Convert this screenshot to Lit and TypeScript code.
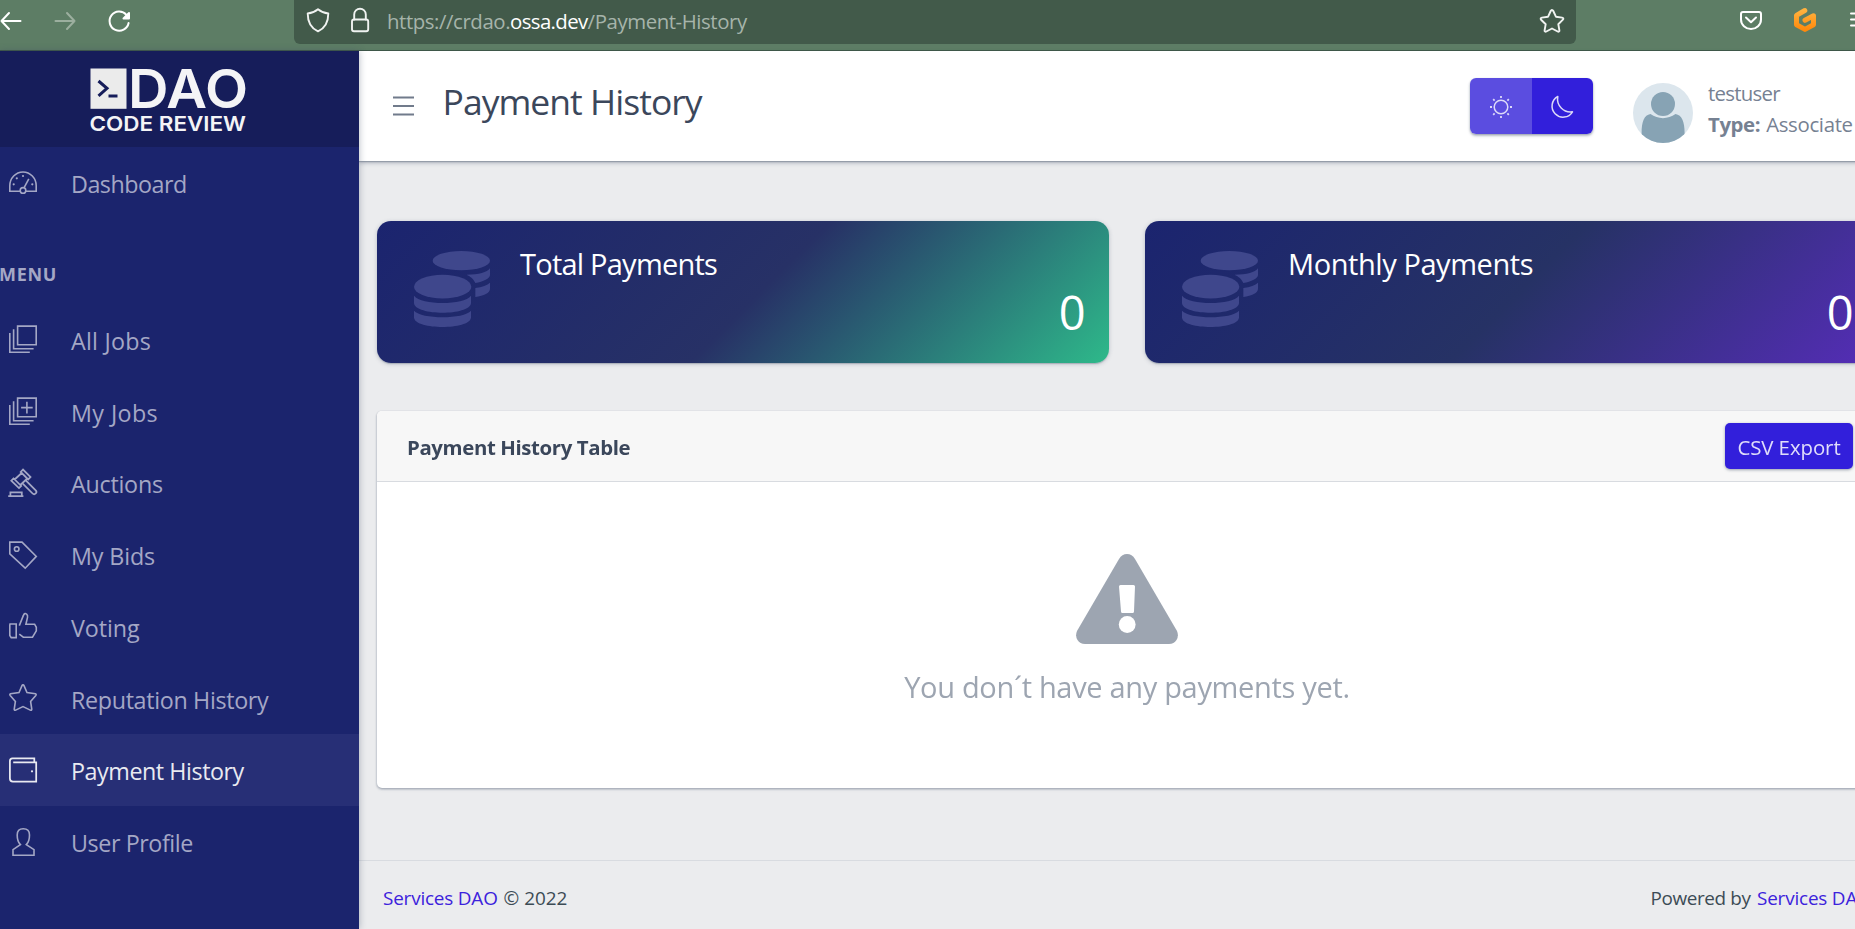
import { LitElement, html, css, svg } from "lit";
import { customElement, property } from "lit/decorators.js";
import { styleMap } from "lit/directives/style-map.js";
import { classMap } from "lit/directives/class-map.js";

const FONT = css`"Open Sans", "Noto Sans", sans-serif`;

const glyphs: Record<string, unknown> = {
  speed: svg`<path d="M11 22.2H.8V16.8a13.2 13.8 0 0 1 26.4 0V22.2H17"/><circle cx="14" cy="21.4" r="2.8"/><path d="M15 18.8 19.8 9.8"/><g class="solid"><circle cx="4.7" cy="15.3" r="1.1"/><circle cx="7.8" cy="9.3" r="1.1"/><circle cx="14" cy="7" r="1.1"/><circle cx="23.3" cy="15.3" r="1.1"/></g>`,
  library: svg`<path d="M8.6 1.1h18.6v18.6H8.6zM4.6 4.2v19.5h20M.8 8v19.3h20"/>`,
  libraryAdd: svg`<path d="M8.6 1.1h18.6v18.6H8.6zM4.6 4.2v19.5h20M.8 8v19.3h20M17.9 4.8v11.6M12.1 10.6h11.6"/>`,
  gavel: svg`<path class="heavy" d="M14 .6 11.7 2.9 19.2 10.4 21.5 8.1zM4.6 9.4 2.3 11.7 10 19.1 12.2 16.9zM12.7 4 5.6 10.5M18.3 9.5 11.3 16M14 14.8 23.6 24.5a2.1 2.1 0 0 0 3.1-3.1L17 11.7M-.8 27.1H14.4M1.4 27v-3.6H12.8V27"/>`,
  tag: svg`<path d="M.8 1.1H13L27.3 15.4 16.2 27.2.8 12.9z"/><circle cx="7.7" cy="8" r="2.3"/>`,
  thumb: svg`<path d="M1 12h6.2v13.6H2.2L.8 23.5V13zM10.3 13.6 14.4 3.4c.7-2.2 2.2-2.2 3.2-1.2 1 .9 1.2 1.9.9 3.2L16.9 12.2h8.7l1.7 3.1v3.5l-3.8 6.4H14.3l-4-3"/>`,
  star: svg`<path d="M14 .9q.7 0 1 .7l3 6.9 8.4 1.3q1.3.5.4 1.6L21.6 17.4l1.2 7.9q-.1 1.4-1.5.8L14 22.6 6.700 26.100q-1.400.6-1.500-.8L6.400 17.400 1.200 11.400Q.3 10.300 1.600 9.800L10 8.500l3-6.900Q13.300.9 14 .900z"/>`,
  wallet: svg`<path class="heavy" d="M25.300 6.300V2.300H3.500A2.700 2.700 0 0 0 .9 5V22.500a3 3 0 0 0 3 3H27.200V6.300H4.200"/><circle class="solid" cx="23" cy="15.300" r="1.100"/>`,
  user: svg`<path d="M14.200.8c-4 0-6 2.700-6 6.200 0 4 .9 7.500 3.200 9.700L4 21.700V27.300H25V21.700l-7.700-5c2.300-2.200 3.200-5.700 3.200-9.700 0-3.500-2.200-6.200-6.300-6.200z"/>`,
};

interface NavEntry { icon: string; label: string; tracking: number; }

@customElement("side-link")
class SideLink extends LitElement {
  @property() icon = "";
  @property() label = "";
  @property({ type: Number }) tracking = 0;
  @property({ type: Boolean, reflect: true }) active = false;
  static styles = css`
    :host { display: flex; align-items: center; gap: 34px; height: 71.75px; padding-left: 9px; box-sizing: border-box; color: #a4a7c5; font: 23.3px/32px ${FONT}; white-space: nowrap; }
    :host([active]) { background: #272f76; color: #e9eaf1; }
    .icon { width: 28px; height: 28px; flex: none; overflow: visible; fill: none; stroke: currentColor; stroke-width: 1.6; }
    .heavy { stroke-width: 1.75; }
    .solid { fill: currentColor; stroke: none; }
    .label { padding-top: 3px; }
  `;
  render() {
    return html`<svg class="icon" viewBox="0 0 28 28">${glyphs[this.icon]}</svg>
      <span class="label" style=${styleMap({ letterSpacing: `${this.tracking}px` })}>${this.label}</span>`;
  }
}

@customElement("stat-card")
class StatCard extends LitElement {
  @property() heading = "";
  @property() value = "";
  @property() tone = "green";
  static styles = css`
    :host { display: block; }
    .card { display: flex; height: 142px; box-sizing: border-box; padding: 30px 23.5px 0 37px; border-radius: 14px; color: #fff; font-family: ${FONT}; box-shadow: 0 1px 1px rgba(60,75,100,.14), 0 2px 1px -1px rgba(60,75,100,.12), 0 1px 4px rgba(60,75,100,.28); }
    .green { background: linear-gradient(135deg, #1b246f, #273166 52%, #2eb98a); }
    .violet { background: linear-gradient(135deg, #1b246f, #263265 51%, #552db7); }
    .coins { width: 76px; height: 76px; flex: none; fill: #3f478c; }
    .body { flex: 1; display: flex; flex-direction: column; padding-left: 30px; }
    .heading { font-size: 29px; line-height: 40px; margin-top: -7px; letter-spacing: -.77px; }
    .violet .heading { letter-spacing: -.43px; }
    .value { font-size: 47px; line-height: 60px; text-align: right; margin-top: -2px; }
  `;
  render() {
    return html`<div class=${classMap({ card: true, [this.tone]: true })}>
      <svg class="coins" viewBox="0 0 228 228">
        <ellipse cx="142" cy="29" rx="86" ry="29"/>
        <path d="M228 52C219 64 195 71 158 71C168 76 178 82 184 96C208 92 228 83 228 72ZM228 95C220 103 205 108 184 111V138C210 134 228 126 228 113Z"/>
        <ellipse cx="86" cy="107" rx="86" ry="35.5"/>
        <path d="M0 134C22 163 150 163 171 134V157C166 195 5 195 0 157ZM0 179C22 205 150 205 171 179V200C166 237 5 237 0 200Z"/>
      </svg>
      <div class="body"><div class="heading">${this.heading}</div><div class="value">${this.value}</div></div>
    </div>`;
  }
}

@customElement("browser-bar")
class BrowserBar extends LitElement {
  static styles = css`
    :host { display: flex; height: 51px; box-sizing: border-box; border-bottom: 1px solid #3f5848; background: #5d7d65; font: 20.4px/28px ${FONT}; }
    svg { display: block; flex: none; fill: none; stroke: #fff; stroke-width: 2; stroke-linecap: round; stroke-linejoin: round; overflow: visible; }
    .tools { width: 294px; flex: none; }
    .address { width: 1282px; height: 44px; box-sizing: border-box; display: flex; background: #425a4a; border-radius: 0 0 6px 6px; flex: none; }
    .url { flex: 1; padding-top: 7px; color: #a6b4aa; letter-spacing: -.43px; white-space: nowrap; }
    .host { color: #fff; letter-spacing: -.62px; }
    .faint { stroke: #9caf9f; }
    .soft { stroke: #f0f3f1; stroke-width: 1.9; }
    .brand { fill: none; stroke: url(#amber); stroke-width: 5; stroke-linejoin: round; }
  `;
  render() {
    return html`
      <svg class="tools" width="294" height="50" viewBox="0 0 294 50">
        <path d="M20.5 21H1.5M9 13 1.5 21 9 29"/>
        <path class="faint" d="M55.5 21H74.5M67 13l7.5 8L67 29"/>
        <path d="M128.6 23a9.6 9.6 0 1 1-2.2-8.2"/><path d="M129 13v5.5h-5.5z" fill="#fff"/>
      </svg>
      <div class="address">
        <svg width="93" height="44" viewBox="294 0 93 44"><path class="soft" d="M318 9.2c3.2 2.7 6.5 3.9 10.3 4.3 0 8.5-2.7 14.5-10.3 17.8-7.6-3.3-10.3-9.3-10.3-17.8 3.8-.4 7.1-1.6 10.3-4.3z"/><path class="soft" d="M354.2 19.5v-5a5.8 5.8 0 0 1 11.6 0v5"/><rect class="soft" x="352" y="19.5" width="16.2" height="11.8" rx="2"/></svg>
        <div class="url">https://crdao.<span class="host">ossa.dev</span>/Payment-History</div>
        <svg width="50" height="44" viewBox="1526 0 50 44"><path class="soft" d="M1552 10c.7 0 1 .4 1.3 1l2.6 5.7 6.2.9c1.3.2 1.6 1.3.8 2.1l-4.6 4.5 1.1 6.1c.2 1.2-.8 1.7-1.7 1.2L1552 28.5l-5.7 3c-.9.5-1.9 0-1.7-1.2l1.1-6.1-4.600-4.500c-.8-.8-.5-1.900.8-2.100l6.200-.9 2.600-5.700c.3-.6.600-1 1.300-1z"/></svg>
      </div>
      <svg width="279" height="50" viewBox="1576 0 279 50">
        <defs><linearGradient id="amber" x1="0" y1="0" x2="0" y2="1"><stop offset="0" stop-color="#ffb13e"/><stop offset="1" stop-color="#ff8a0c"/></linearGradient></defs>
        <path d="M1743 12h16a2 2 0 0 1 2 2v5.500a10 9.500 0 0 1-20 0V14a2 2 0 0 1 2-2zM1746 17.500l5 4.800 5-4.800"/>
        <path class="brand" d="M1804.800 10.500 1796.500 15.300V24.700L1805 29.400 1813.500 24.700V15.800L1805 20.300"/>
        <path d="M1851 13.500H1870M1851 19.500H1870M1851 25.500H1870"/>
      </svg>`;
  }
}

@customElement("app-root")
class AppRoot extends LitElement {
  private home: NavEntry = { icon: "speed", label: "Dashboard", tracking: -0.5 };
  private menu: NavEntry[] = [
    { icon: "library", label: "All Jobs", tracking: 0.25 },
    { icon: "libraryAdd", label: "My Jobs", tracking: 0.4 },
    { icon: "gavel", label: "Auctions", tracking: -0.25 },
    { icon: "tag", label: "My Bids", tracking: -0.14 },
    { icon: "thumb", label: "Voting", tracking: -0.1 },
    { icon: "star", label: "Reputation History", tracking: -0.34 },
    { icon: "wallet", label: "Payment History", tracking: -0.45 },
    { icon: "user", label: "User Profile", tracking: -0.42 },
  ];

  static styles = css`
    :host { display: flex; flex-direction: column; width: 100%; height: 929px; overflow: hidden; background: #ebecee; color: #3c4b64; font-family: ${FONT}; }
    .shell { display: flex; flex: 1; min-height: 0; }
    .sidebar { width: 359px; flex: none; background: #1b246d; box-shadow: 0 0 7px rgba(60,75,100,.4); z-index: 2; }
    .brand { height: 96px; background: #161d5a; display: flex; padding-left: 90px; box-sizing: border-box; }
    .logo { display: block; width: 157px; height: 96px; fill: #f4f4f6; font-family: Inter, sans-serif; }
    .word { font-size: 54px; font-weight: 600; }
    .tagline { font-size: 20.5px; font-weight: 600; }
    .section { height: 84.75px; box-sizing: border-box; padding-top: 42px; font-size: 18px; line-height: 26px; font-weight: 700; letter-spacing: .7px; color: #a4a7c5; margin-left: -1px; }
    .main { width: 1536px; flex: none; display: flex; flex-direction: column; }
    .header { height: 110px; flex: none; background: #fff; display: flex; box-shadow: 0 1px 1px rgba(60,75,100,.3), 0 2px 4px rgba(60,75,100,.35); }
    .burger { width: 21px; height: 20px; margin: 45px 28.5px 0 34px; display: block; stroke: #717b8b; stroke-width: 1.8; }
    .title { width: 1027.5px; font-size: 35.5px; line-height: 48px; padding-top: 26px; letter-spacing: -.97px; color: #3b475b; white-space: nowrap; box-sizing: border-box; }
    .modes { display: flex; margin-top: 27px; height: 56px; width: 123px; border-radius: 6px; overflow: hidden; box-shadow: 0 1px 2px rgba(60,75,100,.3), 0 2px 3px rgba(60,75,100,.3); }
    .mode { width: 62px; background: #5b4de0; }
    .mode.dark { width: 61px; background: #321fdb; }
    .mode svg { display: block; fill: none; stroke: #dcd9f8; stroke-width: 1.5; stroke-linejoin: round; }
    .avatar { display: block; width: 60px; height: 60px; margin: 32px 0 0 40px; }
    .who { margin-left: 15px; padding-top: 27px; font-size: 20.4px; line-height: 31px; color: #768192; white-space: nowrap; }
    .name { letter-spacing: -.74px; }
    .kind { letter-spacing: -.33px; }
    .kind b { letter-spacing: -.4px; margin-right: 1px; }
    .stats { display: grid; grid-template-columns: 732px 732px; gap: 36px; padding: 60px 18px 0; }
    .panel { margin: 48px 18px 0; height: 377px; flex: none; background: #fff; border-radius: 5px; overflow: hidden; }
    .wrap { filter: drop-shadow(0 1px 1px rgba(60,75,100,.35)) drop-shadow(0 1px 1px rgba(60,75,100,.2)); }
    .panel-head { height: 71px; box-sizing: border-box; border-bottom: 1px solid #d8dbe0; background: #f7f7f7; display: flex; justify-content: space-between; padding: 12px 24px 0 30px; font-size: 20.4px; line-height: 28px; }
    .panel-title { font-weight: 700; letter-spacing: -.38px; padding-top: 10px; color: #3b475b; }
    .export { width: 128px; height: 46px; box-sizing: border-box; padding: 10px 0 0; text-align: center; background: #321fdb; color: #e0ddfa; border-radius: 5px; box-shadow: 0 1px 3px rgba(60,75,100,.5); letter-spacing: -.06px; line-height: 28px; }
    .empty { display: flex; flex-direction: column; align-items: center; padding-top: 72px; color: #9da5b1; font-size: 29px; line-height: 40px; letter-spacing: -.32px; }
    .warning { display: block; width: 102px; height: 90px; margin-bottom: 22.5px; }
    .footer { height: 69px; box-sizing: border-box; margin-top: 72px; border-top: 1px solid #d8dbe0; display: flex; padding: 23.5px 0 0 24px; font-size: 18.9px; line-height: 26px; color: #3c4b55; white-space: nowrap; }
    .link { color: #3c22dc; letter-spacing: -.18px; margin-right: 1px; }
    .left { width: 1267.5px; }
    .powered { letter-spacing: -.37px; margin-right: 1.5px; }
  `;

  private link(n: NavEntry, active = false) {
    return html`<side-link icon=${n.icon} label=${n.label} .tracking=${n.tracking} ?active=${active}></side-link>`;
  }

  render() {
    return html`
      <browser-bar></browser-bar>
      <div class="shell">
        <nav class="sidebar">
          <div class="brand">
            <svg class="logo" viewBox="90 51 157 96">
              <rect x="90.5" y="68.5" width="36" height="40.3" fill="#ebebeb"/>
              <path d="M98.5 81 107 88.3 98.5 95.8" fill="none" stroke="#161d5a" stroke-width="3"/><path d="M108.5 96H117.5" stroke="#161d5a" stroke-width="3"/>
              <text class="word" x="128" y="108.4" textLength="120" lengthAdjust="spacingAndGlyphs">DAO</text>
              <text class="tagline" x="89.5" y="131.2" textLength="156.5" lengthAdjust="spacingAndGlyphs">CODE REVIEW</text>
            </svg>
          </div>
          ${this.link(this.home)}
          <div class="section">MENU</div>
          ${this.menu.map((n) => this.link(n, n.label === "Payment History"))}
        </nav>
        <div class="main">
          <header class="header">
            <svg class="burger" viewBox="0 0 21 20"><path d="M0 1.5H21M0 10H21M0 18.5H21"/></svg>
            <div class="title">Payment History</div>
            <div class="modes">
              <div class="mode"><svg width="62" height="56" viewBox="0 0 62 56"><circle cx="31" cy="29" r="6.8"/><path stroke-width="1.8" d="M31 18v2M31 38v2M20 29h2M40 29h2M23.2 21.2l1.4 1.4M37.4 35.4l1.4 1.4M38.8 21.2l-1.4 1.4M24.6 35.4l-1.4 1.4"/></svg></div>
              <div class="mode dark"><svg width="61" height="56" viewBox="0 0 61 56"><path d="M25.8 18.5A11 11 0 1 0 40.5 33.8 13 13 0 0 1 25.8 18.5z"/></svg></div>
            </div>
            <svg class="avatar" viewBox="0 0 60 60"><defs><clipPath id="disc"><circle cx="30" cy="30" r="30"/></clipPath></defs><circle cx="30" cy="30" r="30" fill="#dce6ed"/><g clip-path="url(#disc)" fill="#87a3b4"><path d="M17.5 31C11 32 8.6 39 8.6 50V60H51.6V50C51.6 39 49 32 42.5 31 35 36.5 25 36.5 17.5 31z"/><circle cx="30" cy="21" r="13" fill="#dce6ed"/><circle cx="30" cy="21" r="12"/></g></svg>
            <div class="who"><div class="name">testuser</div><div class="kind"><b>Type:</b> Associate</div></div>
          </header>
          <div class="stats">
            <stat-card heading="Total Payments" value="0" tone="green"></stat-card>
            <stat-card heading="Monthly Payments" value="0" tone="violet"></stat-card>
          </div>
          <div class="wrap"><section class="panel">
            <div class="panel-head"><div class="panel-title">Payment History Table</div><div class="export">CSV Export</div></div>
            <div class="empty">
              <svg class="warning" viewBox="0 0 102 90"><path fill="#9da5b1" d="M51 0Q56 0 59 5L101 77Q103 82 100.5 86 98 90 93 90H9Q4 90 1.5 86-1 82 1 77L43 5Q46 0 51 0z"/><path fill="#fff" d="M44.5 31H57.5Q59 31 59 32.5L58 57.5Q58 59 56.5 59H46.5Q45 59 45 57.5L43 32.5Q43 31 44.5 31z"/><circle cx="51.2" cy="70.5" r="8.4" fill="#fff"/></svg>
              <div>You don´t have any payments yet.</div>
            </div>
          </section></div>
          <footer class="footer">
            <div class="left"><span class="link">Services DAO</span> © 2022</div>
            <div><span class="powered">Powered by</span> <span class="link">Services DAO</span></div>
          </footer>
        </div>
      </div>`;
  }
}
